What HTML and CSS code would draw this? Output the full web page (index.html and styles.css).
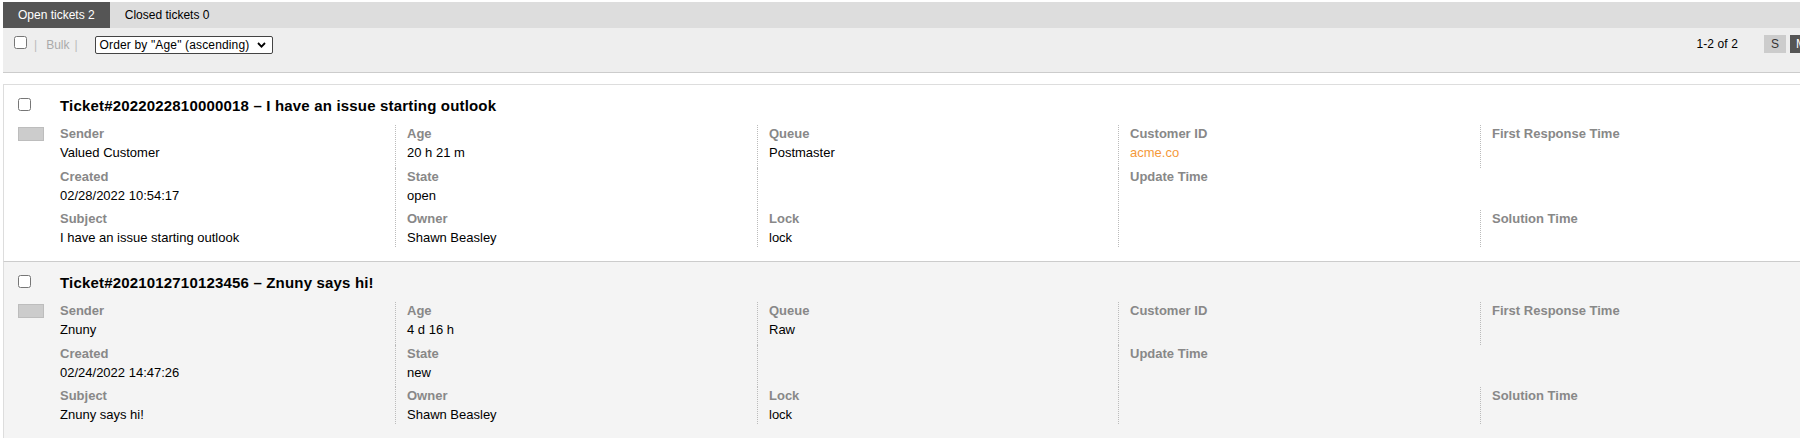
FILE: index.html
```html
<!DOCTYPE html>
<html lang="en">
<head>
<meta charset="utf-8">
<title>Tickets</title>
<link rel="stylesheet" href="styles.css">
</head>
<body>
<div class="page">
  <div class="tabs">
    <a class="tab active">Open tickets 2</a>
    <a class="tab">Closed tickets 0</a>
  </div>
  <div class="toolbar">
    <div class="tb-left">
      <input type="checkbox" class="cb tb-cb">
      <span class="sep">|</span>
      <span class="bulk">Bulk</span>
      <span class="sep sep2">|</span>
      <div class="select">
        <span class="select-text">Order by "Age" (ascending)</span>
        <svg class="chev" width="9" height="6" viewBox="0 0 9 6"><polyline points="1,1 4.5,4.6 8,1" fill="none" stroke="#000" stroke-width="1.8"/></svg>
      </div>
    </div>
    <div class="tb-right">
      <span class="pager">1-2 of 2</span>
      <span class="view">S</span>
      <span class="view active">M</span>
    </div>
  </div>

  <div class="list">
    <div class="ticket">
      <div class="t-head">
        <input type="checkbox" class="cb">
        <h2 class="t-title">Ticket#2022022810000018 – I have an issue starting outlook</h2>
      </div>
      <div class="t-body">
        <span class="sender-flag"></span>
        <div class="fields">
          <div class="field first"><div class="lbl">Sender</div><div class="val">Valued Customer</div></div>
          <div class="field"><div class="lbl">Age</div><div class="val">20 h 21 m</div></div>
          <div class="field"><div class="lbl">Queue</div><div class="val">Postmaster</div></div>
          <div class="field"><div class="lbl">Customer ID</div><div class="val link">acme.co</div></div>
          <div class="field"><div class="lbl">First Response Time</div><div class="val"></div></div>

          <div class="field first"><div class="lbl">Created</div><div class="val">02/28/2022 10:54:17</div></div>
          <div class="field"><div class="lbl">State</div><div class="val">open</div></div>
          <div class="field"></div>
          <div class="field"><div class="lbl">Update Time</div><div class="val"></div></div>
          <div class="field empty"></div>

          <div class="field first"><div class="lbl">Subject</div><div class="val">I have an issue starting outlook</div></div>
          <div class="field"><div class="lbl">Owner</div><div class="val">Shawn Beasley</div></div>
          <div class="field"><div class="lbl">Lock</div><div class="val">lock</div></div>
          <div class="field"></div>
          <div class="field"><div class="lbl">Solution Time</div><div class="val"></div></div>
        </div>
      </div>
    </div>

    <div class="ticket alt">
      <div class="t-head">
        <input type="checkbox" class="cb">
        <h2 class="t-title">Ticket#2021012710123456 – Znuny says hi!</h2>
      </div>
      <div class="t-body">
        <span class="sender-flag"></span>
        <div class="fields">
          <div class="field first"><div class="lbl">Sender</div><div class="val">Znuny</div></div>
          <div class="field"><div class="lbl">Age</div><div class="val">4 d 16 h</div></div>
          <div class="field"><div class="lbl">Queue</div><div class="val">Raw</div></div>
          <div class="field"><div class="lbl">Customer ID</div><div class="val"></div></div>
          <div class="field"><div class="lbl">First Response Time</div><div class="val"></div></div>

          <div class="field first"><div class="lbl">Created</div><div class="val">02/24/2022 14:47:26</div></div>
          <div class="field"><div class="lbl">State</div><div class="val">new</div></div>
          <div class="field"></div>
          <div class="field"><div class="lbl">Update Time</div><div class="val"></div></div>
          <div class="field empty"></div>

          <div class="field first"><div class="lbl">Subject</div><div class="val">Znuny says hi!</div></div>
          <div class="field"><div class="lbl">Owner</div><div class="val">Shawn Beasley</div></div>
          <div class="field"><div class="lbl">Lock</div><div class="val">lock</div></div>
          <div class="field"></div>
          <div class="field"><div class="lbl">Solution Time</div><div class="val"></div></div>
        </div>
      </div>
    </div>
  </div>
</div>
</body>
</html>
```

FILE: styles.css
```css
* { box-sizing: border-box; }

html, body {
  margin: 0;
  padding: 0;
  overflow: hidden;
  background: #fff;
}

body {
  font-family: "Liberation Sans", Arial, Helvetica, sans-serif;
  font-size: 13px;
  color: #000;
}

.page {
  margin: 2px 0 0 3px;
  width: 1817px;
}

/* Tabs */
.tabs {
  display: flex;
  height: 26px;
  background: #ddd;
}

.tab {
  display: block;
  padding: 1px 15px 0 15px;
  font-size: 12px;
  line-height: 25px;
  color: #000;
}

.tab.active {
  background: #555;
  color: #fff;
}

/* Toolbar */
.toolbar {
  display: flex;
  justify-content: space-between;
  align-items: flex-start;
  height: 45px;
  background: #eee;
  border-bottom: 1px solid #ccc;
  padding: 0 8px 0 11px;
}

.tb-left {
  display: flex;
  align-items: center;
  height: 18px;
  margin-top: 8px;
  font-size: 12px;
}

.cb {
  width: 13px;
  height: 13px;
  margin: 0;
  flex: none;
}

.tb-cb {
  align-self: flex-start;
  margin-top: 0;
}

.sep {
  color: #bbb;
  margin-left: 7px;
  margin-right: 9px;
}

.sep2 {
  margin-left: 5px;
  margin-right: 17px;
}

.bulk {
  color: #aaa;
}

.select {
  display: flex;
  align-items: center;
  justify-content: space-between;
  width: 178px;
  height: 18px;
  padding: 0 6px 0 4px;
  background: #fff;
  border: 1px solid #444;
  border-radius: 2px;
  font-size: 12px;
  line-height: 16px;
  color: #000;
}

.select-text {
  letter-spacing: 0.15px;
}

.chev {
  display: block;
}

.tb-right {
  display: flex;
  align-items: center;
  height: 18px;
  margin-top: 7px;
  font-size: 12px;
}

.pager {
  margin-right: 22px;
  letter-spacing: 0.1px;
}

.view {
  display: block;
  width: 22px;
  height: 18px;
  line-height: 18px;
  text-align: center;
  background: #ccc;
  color: #333;
  margin-left: 4px;
}

.view.active {
  background: #555;
  color: #fff;
}

/* Ticket list */
.list {
  margin-top: 11px;
}

.ticket {
  border-top: 1px solid #ddd;
  border-left: 1px solid #ddd;
  padding: 13px 0 14px 14px;
  background: #fff;
}

.ticket.alt {
  border-top-color: #ccc;
  background: #f4f4f4;
}

.t-head {
  display: flex;
  align-items: flex-start;
  height: 15px;
}

.t-title {
  margin: 0 0 0 29px;
  font-size: 15px;
  line-height: 15px;
  font-weight: bold;
  letter-spacing: 0.18px;
  color: #000;
  white-space: nowrap;
}

.t-body {
  display: flex;
  align-items: flex-start;
  margin-top: 12px;
}

.sender-flag {
  display: block;
  flex: none;
  width: 26px;
  height: 14px;
  margin-top: 2px;
  margin-right: 16px;
  background: #ccc;
  border: 1px solid #bdbdbd;
}

.fields {
  display: grid;
  grid-template-columns: 335px 362px 361px 362px 362px;
  grid-template-rows: 42.5px 42.5px 37px;
}

.field {
  border-left: 1px dotted #bbb;
  padding-left: 11px;
}

.field.first {
  border-left: none;
  padding-left: 0;
}

.field.empty {
  border-left-color: transparent;
}

.lbl {
  font-weight: bold;
  color: #888;
  line-height: 18px;
  white-space: nowrap;
}

.val {
  line-height: 19px;
  min-height: 19px;
  white-space: nowrap;
}

.val.link {
  color: #f5993a;
}
```
